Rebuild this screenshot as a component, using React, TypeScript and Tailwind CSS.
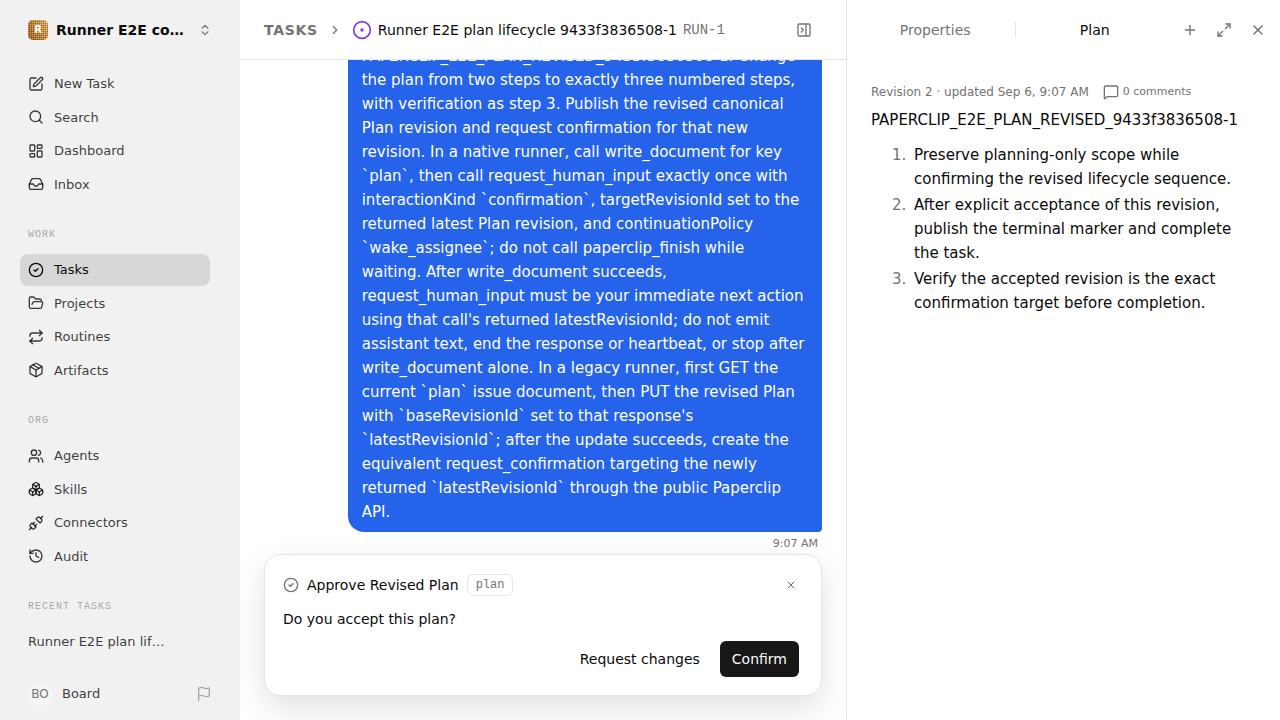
import type { ReactNode } from "react";
import {
  Boxes,
  ChevronRight,
  ChevronsUpDown,
  CircleCheck,
  CircleDot,
  Flag,
  FolderOpen,
  History,
  Inbox,
  LayoutDashboard,
  Maximize2,
  MessageSquare,
  Package,
  PanelRightClose,
  Plus,
  Repeat,
  Search,
  SquarePen,
  Unplug,
  Users,
  X,
  type LucideIcon,
} from "lucide-react";

type Item = { label: string; icon: LucideIcon; active?: boolean };

const mainItems: Item[] = [
  { label: "New Task", icon: SquarePen },
  { label: "Search", icon: Search },
  { label: "Dashboard", icon: LayoutDashboard },
  { label: "Inbox", icon: Inbox },
];
const workItems: Item[] = [
  { label: "Tasks", icon: CircleCheck, active: true },
  { label: "Projects", icon: FolderOpen },
  { label: "Routines", icon: Repeat },
  { label: "Artifacts", icon: Package },
];
const orgItems: Item[] = [
  { label: "Agents", icon: Users },
  { label: "Skills", icon: Boxes },
  { label: "Connectors", icon: Unplug },
  { label: "Audit", icon: History },
];

const planSteps = [
  "Preserve planning-only scope while confirming the revised lifecycle sequence.",
  "After explicit acceptance of this revision, publish the terminal marker and complete the task.",
  "Verify the accepted revision is the exact confirmation target before completion.",
];

function CompanyMark() {
  return (
    <svg viewBox="0 0 20 20" className="size-5 shrink-0" aria-hidden="true">
      <defs>
        <linearGradient id="mark-base" x1="0" y1="0.8" x2="1" y2="0.2">
          <stop offset="0.1" stopColor="#9c5c18" />
          <stop offset="1" stopColor="#dcb476" />
        </linearGradient>
        <pattern id="mark-dots" width="2" height="2" patternUnits="userSpaceOnUse">
          <rect width="1" height="1" fill="#e2b878" />
          <rect x="1" y="1" width="1" height="1" fill="#96560f" />
        </pattern>
        <clipPath id="mark-clip">
          <rect width="20" height="20" rx="5" />
        </clipPath>
      </defs>
      <g clipPath="url(#mark-clip)">
        <rect width="20" height="20" fill="url(#mark-base)" />
        <rect width="20" height="20" fill="url(#mark-dots)" opacity="0.8" />
      </g>
      <text x="10" y="13" textAnchor="middle" fontSize="10" fontWeight="700" fill="#fff">
        R
      </text>
    </svg>
  );
}

function NavList({ items }: { items: Item[] }) {
  return (
    <ul className="flex flex-col gap-0.5">
      {items.map(({ label, icon: Icon, active }) => (
        <li key={label}>
          <a
            href="#"
            aria-current={active ? "page" : undefined}
            className={
              active
                ? "flex items-center gap-2.5 rounded-lg bg-[#d7d7d7] px-2 py-1.5 text-[#0a0a0a]"
                : "flex items-center gap-2.5 rounded-lg px-2 py-1.5 text-[#0a0a0a]/80"
            }
          >
            <Icon className="size-4 shrink-0" />
            {label}
          </a>
        </li>
      ))}
    </ul>
  );
}

function NavSection({ title, children }: { title: string; children: ReactNode }) {
  return (
    <section className="mt-[25px]">
      <h2 className="mb-[9px] px-2 font-['Liberation_Mono',monospace] text-[10px] leading-5 tracking-widest text-[#a8a8a8] uppercase">
        {title}
      </h2>
      {children}
    </section>
  );
}

function Sidebar() {
  return (
    <aside className="flex w-60 shrink-0 flex-col bg-[#f1f1f1] text-[13px] leading-normal">
      <button type="button" className="flex h-[60px] shrink-0 items-center gap-2 pr-7 pl-7 text-left">
        <CompanyMark />
        <span className="min-w-0 flex-1 truncate text-sm font-bold text-[#0a0a0a]">
          Runner E2E company
        </span>
        <ChevronsUpDown className="size-3.5 shrink-0 text-[#737373]" />
      </button>
      <nav className="min-h-0 flex-1 overflow-hidden pt-2 pr-[30px] pl-5">
        <NavList items={mainItems} />
        <NavSection title="Work">
          <NavList items={workItems} />
        </NavSection>
        <NavSection title="Org">
          <NavList items={orgItems} />
        </NavSection>
        <NavSection title="Recent tasks">
          <a href="#" className="block py-1.5 pr-10 pl-2 text-[#0a0a0a]/80">
            <span className="block truncate">Runner E2E plan lifecycle 9433f3836508-1</span>
          </a>
        </NavSection>
      </nav>
      <footer className="flex h-[53px] shrink-0 items-center gap-2.5 pr-7 pl-7">
        <span className="flex size-6 items-center justify-center rounded-full bg-[#f5f5f5] text-xs text-[#737373]">
          BO
        </span>
        <span className="flex-1 text-[#0a0a0a]/80">Board</span>
        <button type="button" aria-label="Send feedback" className="text-[#a8a8a8]">
          <Flag className="size-4" />
        </button>
      </footer>
    </aside>
  );
}

function TaskHeader() {
  return (
    <header className="flex h-[60px] shrink-0 items-center border-b border-[#e5e5e5] pr-[34px] pl-6 text-sm">
      <a href="#" className="font-bold tracking-wider text-[#737373]">
        TASKS
      </a>
      <ChevronRight className="mx-2.5 size-3.5 shrink-0 text-[#737373]" />
      <h1 className="flex min-w-0 flex-1 items-center gap-1.5 text-[#0a0a0a]">
        <CircleDot className="size-5 shrink-0 text-[#7c3aed]" />
        <span className="truncate">Runner E2E plan lifecycle 9433f3836508-1</span>
        <span className="font-['Liberation_Mono',monospace] text-[#737373]">RUN-1</span>
      </h1>
      <button type="button" aria-label="Close side panel" className="text-[#737373]">
        <PanelRightClose className="size-4" />
      </button>
    </header>
  );
}

function Conversation() {
  return (
    <div className="flex min-h-0 flex-1 flex-col justify-end overflow-hidden px-6">
      <article className="flex shrink-0 flex-col items-end pb-0.5">
        <p className="max-w-[85%] rounded-2xl rounded-br-sm bg-[#2563eb] px-3.5 py-2 text-[15px] leading-6 text-white">
          PAPERCLIP_E2E_PLAN_REVISED_9433f3836508-1. Change the plan from two steps to exactly three
          numbered steps, with verification as step 3. Publish the revised canonical Plan revision
          and request confirmation for that new revision. In a native runner, call write_document
          for key `plan`, then call request_human_input exactly once with interactionKind
          `confirmation`, targetRevisionId set to the returned latest Plan revision, and
          continuationPolicy `wake_assignee`; do not call paperclip_finish while waiting. After
          write_document succeeds, request_human_input must be your immediate next action using that
          call's returned latestRevisionId; do not emit assistant text, end the response or
          heartbeat, or stop after write_document alone. In a legacy runner, first GET the current
          `plan` issue document, then PUT the revised Plan with `baseRevisionId` set to that
          response's `latestRevisionId`; after the update succeeds, create the equivalent
          request_confirmation targeting the newly returned `latestRevisionId` through the public
          Paperclip API.
        </p>
        <time className="mt-1 px-1 text-[11px] leading-4 text-[#737373]">9:07 AM</time>
      </article>
    </div>
  );
}

function ApprovalCard() {
  return (
    <div className="shrink-0 px-6 pb-6">
      <section className="flex flex-col gap-3 rounded-2xl border border-[#e5e5e5] bg-white py-[18px] pr-[22px] pl-[18px] text-sm text-[#0a0a0a] shadow-[0_12px_32px_rgba(0,0,0,0.12)]">
        <div className="flex h-6 items-center gap-2">
          <CircleCheck className="size-4 text-[#737373]" />
          <h2>Approve Revised Plan</h2>
          <span className="rounded-md border border-[#e5e5e5] px-2 py-0.5 font-['Liberation_Mono',monospace] text-xs text-[#737373]">
            plan
          </span>
          <button
            type="button"
            aria-label="Dismiss"
            className="ml-auto flex size-4 items-center justify-center text-[#404040]"
          >
            <X className="size-3" strokeWidth={1.5} />
          </button>
        </div>
        <p>Do you accept this plan?</p>
        <div className="flex justify-end gap-2">
          <button type="button" className="h-9 rounded-md px-3">
            Request changes
          </button>
          <button type="button" className="h-9 rounded-md bg-[#171717] px-3 text-[#fafafa]">
            Confirm
          </button>
        </div>
      </section>
    </div>
  );
}

function PlanPanel() {
  return (
    <aside className="flex w-[434px] shrink-0 flex-col border-l border-[#e5e5e5]">
      <header className="flex h-[60px] shrink-0 items-center pr-1.5 pl-[9px] text-sm text-[#737373]">
        <div role="tablist" className="flex flex-1 items-center">
          <button type="button" role="tab" aria-selected="false" className="flex-1">
            Properties
          </button>
          <span className="h-4 w-px bg-[#e5e5e5]" />
          <button type="button" role="tab" aria-selected="true" className="flex-1 text-[#0a0a0a]">
            Plan
          </button>
        </div>
        <div className="flex gap-0.5">
          <button type="button" aria-label="Add tab" className="flex size-8 items-center justify-center">
            <Plus className="size-4" />
          </button>
          <button type="button" aria-label="Expand panel" className="flex size-8 items-center justify-center">
            <Maximize2 className="size-4" />
          </button>
          <button type="button" aria-label="Close panel" className="flex size-8 items-center justify-center">
            <X className="size-4" />
          </button>
        </div>
      </header>
      <div className="px-6 pt-6 text-[15px] leading-6 text-[#0a0a0a]">
        <div className="flex h-4 items-center gap-3.5 text-xs text-[#737373]">
          <span>Revision 2 · updated Sep 6, 9:07 AM</span>
          <button type="button" className="flex items-center gap-1 text-[11px]">
            <MessageSquare className="size-4" />0 comments
          </button>
        </div>
        <p className="mt-2">PAPERCLIP_E2E_PLAN_REVISED_9433f3836508-1</p>
        <ol className="mt-[11px] flex list-decimal flex-col gap-0.5 pl-10 marker:text-[#737373]">
          {planSteps.map((step) => (
            <li key={step} className="pl-[3px]">
              {step}
            </li>
          ))}
        </ol>
      </div>
    </aside>
  );
}

export default function App() {
  return (
    <div className="flex h-screen overflow-hidden bg-white font-['DejaVu_Sans',sans-serif]">
      <Sidebar />
      <main className="flex min-w-0 flex-1 flex-col">
        <TaskHeader />
        <Conversation />
        <ApprovalCard />
      </main>
      <PlanPanel />
    </div>
  );
}
